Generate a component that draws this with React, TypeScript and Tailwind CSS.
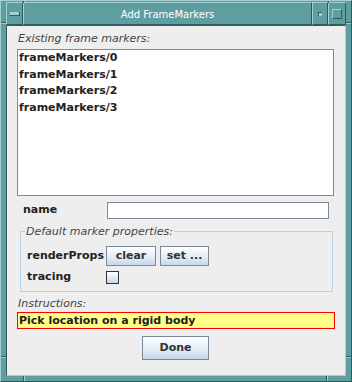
import React from "react";

const DARK = "bg-[#2f5b5c]";
const LIGHT = "bg-[#a3cfd0]";

function Tick({ className }: { className: string }) {
  return <div className={"absolute " + className} />;
}

export default function App() {
  const items = ["frameMarkers/0", "frameMarkers/1", "frameMarkers/2", "frameMarkers/3"];
  const btn =
    "h-[20px] flex items-center justify-center border border-[#7a8a99] bg-[linear-gradient(to_bottom,#ffffff,#e4edf6_55%,#c6d7ea)] font-bold text-[11px] text-[#333333]";
  return (
    <div className="relative w-[352px] h-[382px] bg-[#5f9ea0] border border-t-[#a3cfd0] border-l-[#a3cfd0] border-b-[#2f5b5c] border-r-[#2f5b5c] pt-[1px] px-[5px] pb-[5px] flex flex-col font-['DejaVu_Sans',sans-serif]">
      {/* frame corner ticks */}
      <Tick className={"left-[22px] top-0 w-[1px] h-[2px] " + DARK} />
      <Tick className={"left-[23px] top-0 w-[1px] h-[2px] " + LIGHT} />
      <Tick className={"left-[327px] top-0 w-[1px] h-[2px] " + DARK} />
      <Tick className={"left-[328px] top-0 w-[1px] h-[2px] " + LIGHT} />
      <Tick className={"left-0 top-[21px] w-[5px] h-[1px] " + DARK} />
      <Tick className={"left-0 top-[22px] w-[5px] h-[1px] " + LIGHT} />
      <Tick className={"right-0 top-[21px] w-[5px] h-[1px] " + DARK} />
      <Tick className={"right-0 top-[22px] w-[5px] h-[1px] " + LIGHT} />
      <Tick className={"left-0 top-[355px] w-[5px] h-[1px] " + DARK} />
      <Tick className={"left-0 top-[356px] w-[5px] h-[1px] " + LIGHT} />
      <Tick className={"right-0 top-[355px] w-[5px] h-[1px] " + DARK} />
      <Tick className={"right-0 top-[356px] w-[5px] h-[1px] " + LIGHT} />
      <Tick className={"left-[22px] bottom-0 w-[1px] h-[5px] " + DARK} />
      <Tick className={"left-[23px] bottom-0 w-[1px] h-[5px] " + LIGHT} />
      <Tick className={"left-[325px] bottom-0 w-[1px] h-[5px] " + DARK} />
      <Tick className={"left-[326px] bottom-0 w-[1px] h-[5px] " + LIGHT} />

      {/* title bar */}
      <div className="flex h-[23px] shrink-0">
        <div className="w-[17px] border border-t-[#a3cfd0] border-l-[#a3cfd0] border-b-[#2f5b5c] border-r-[#2f5b5c] flex items-center justify-center">
          <div className="w-[10px] h-[4px] bg-[#a3cfd0] border-b border-r border-b-[#2f5b5c] border-r-[#2f5b5c]" />
        </div>
        <div className="flex-1 border border-t-[#a3cfd0] border-l-[#a3cfd0] border-b-[#2f5b5c] border-r-[#2f5b5c] flex items-center justify-center text-white text-[10px] leading-[12px] pt-[3px]">
          Add FrameMarkers
        </div>
        <div className="w-[16px] border border-t-[#a3cfd0] border-l-[#a3cfd0] border-b-[#2f5b5c] border-r-[#2f5b5c] flex items-center justify-center">
          <div className="w-[4px] h-[4px] bg-[#a3cfd0] border-t border-l border-t-[#2f5b5c] border-l-[#2f5b5c]" />
        </div>
        <div className="w-[18px] border border-t-[#a3cfd0] border-l-[#a3cfd0] border-b-[#2f5b5c] border-r-[#2f5b5c] flex items-center justify-center">
          <div className="w-[10px] h-[10px] border border-t-[#a3cfd0] border-l-[#a3cfd0] border-b-[#2f5b5c] border-r-[#2f5b5c]" />
        </div>
      </div>

      {/* client area */}
      <div className="h-[351px] border border-t-[#2f5b5c] border-l-[#2f5b5c] border-b-[#a3cfd0] border-r-[#a3cfd0] bg-[#eeeeee] pl-[10px] flex flex-col text-[11px] text-[#333333]">
        <div className="pt-[5px] pl-[1px] leading-[15px] italic text-[#444444]">Existing frame markers:</div>
        <div className="mt-[3px] w-[317px] h-[147px] border border-[#7a8a99] bg-white pl-[1px]">
          {items.map((it) => (
            <div key={it} className="h-[16.67px] leading-[16.67px] font-bold text-[#222222]">
              {it}
            </div>
          ))}
        </div>
        <div className="mt-[6px] h-[17px] flex items-center">
          <div className="w-[90px] pl-[6px] font-bold text-[#222222]">name</div>
          <div className="w-[222px] h-[17px] border border-[#7a8a99] bg-white" />
        </div>
        <fieldset className="mt-[5px] ml-[3px] w-[313px] border border-[#b8cfe5] pl-[6px] pb-[7px]">
          <legend className="ml-[-2px] px-[1px] leading-[15px] italic text-[#444444]">Default marker properties:</legend>
          <div className="mt-[7px] h-[20px] flex items-center">
            <div className="w-[79px] font-bold text-[#222222]">renderProps</div>
            <div className={btn + " w-[50px]"}>clear</div>
            <div className={btn + " w-[49px] ml-[4px]"}>set ...</div>
          </div>
          <div className="mt-[5px] h-[13px] flex items-center">
            <div className="w-[79px] font-bold text-[#222222]">tracing</div>
            <div className="w-[13px] h-[13px] border border-[#333333] bg-[linear-gradient(to_bottom,#ffffff,#c6d7ea)]" />
          </div>
        </fieldset>
        <div className="mt-[4px] pl-[1px] leading-[15px] italic text-[#444444]">Instructions:</div>
        <div className="mt-[1px] w-[318px] h-[17px] border border-[#ff0000] bg-[#ffff88] pl-[1px] leading-[15px] font-bold text-[#222222]">
          Pick location on a rigid body
        </div>
        <div className={btn + " mt-[7px] ml-[125px] w-[67px] !h-[24px]"}>Done</div>
      </div>
    </div>
  );
}
